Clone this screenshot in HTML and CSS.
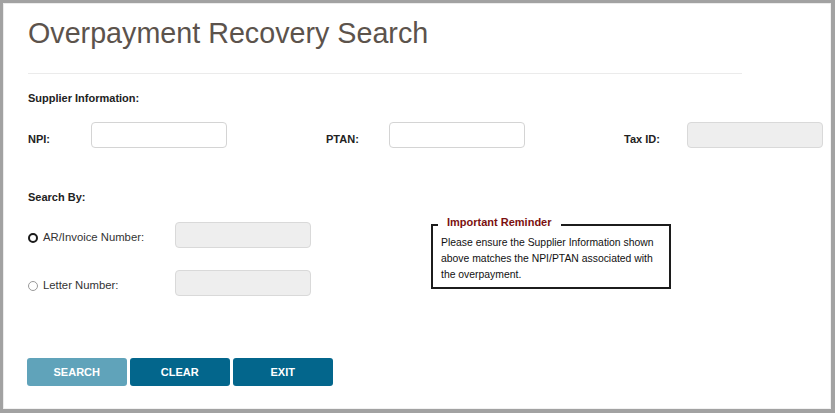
FILE: index.html
```html
<!DOCTYPE html>
<html lang="en">
<head>
<meta charset="utf-8">
<title>Overpayment Recovery Search</title>
<link rel="stylesheet" href="styles.css">
</head>
<body>
<div class="frame">
  <h1 class="title">Overpayment Recovery Search</h1>
  <div class="rule"></div>

  <div class="section-title">Supplier Information:</div>
  <div class="supplier-row">
    <div class="field">
      <label class="field-label">NPI:</label>
      <input class="text-input" type="text">
    </div>
    <div class="field">
      <label class="field-label">PTAN:</label>
      <input class="text-input" type="text">
    </div>
    <div class="field">
      <label class="field-label">Tax ID:</label>
      <input class="text-input" type="text" disabled>
    </div>
  </div>

  <div class="section-title search-title">Search By:</div>
  <div class="search-area">
    <div class="search-options">
      <div class="option">
        <label class="radio-label"><span class="radio radio-focus"></span>AR/Invoice Number:</label>
        <input class="text-input" type="text" disabled>
      </div>
      <div class="option">
        <label class="radio-label"><span class="radio"></span>Letter Number:</label>
        <input class="text-input" type="text" disabled>
      </div>
    </div>
    <fieldset class="reminder">
      <legend class="reminder-legend">Important Reminder</legend>
      <p class="reminder-text">Please ensure the Supplier Information shown above matches the NPI/PTAN associated with the overpayment.</p>
    </fieldset>
  </div>

  <div class="buttons">
    <button class="btn btn-disabled" type="button">SEARCH</button>
    <button class="btn" type="button">CLEAR</button>
    <button class="btn" type="button">EXIT</button>
  </div>
</div>
</body>
</html>
```

FILE: styles.css
```css
html, body {
  margin: 0;
  padding: 0;
  background: #ffffff;
}

.frame {
  box-sizing: border-box;
  width: 835px;
  height: 413px;
  border-style: solid;
  border-color: #a2a2a2;
  border-width: 3px 4px 4px 3px;
  box-shadow: inset 1px 1px 0 #ececec, inset -1px -1px 0 #f2f2f2;
  padding: 0 0 0 25px;
  font-family: "Liberation Sans", Arial, sans-serif;
  color: #333333;
  overflow: hidden;
}

.title {
  margin: 13px 0 0;
  font-size: 28.7px;
  line-height: 34px;
  font-weight: normal;
  color: #5c534c;
}

.rule {
  margin-top: 23px;
  width: 714px;
  height: 1px;
  background: #ebebeb;
}

.section-title {
  margin-top: 18px;
  font-size: 11px;
  line-height: 13px;
  font-weight: bold;
  color: #222222;
}

.supplier-row {
  margin-top: 17px;
  display: grid;
  grid-template-columns: 298px 298px 199px;
}

.field {
  display: flex;
  align-items: center;
}

.field-label {
  width: 63px;
  font-size: 11px;
  line-height: 13px;
  font-weight: bold;
  color: #222222;
  padding-top: 8px;
}

.text-input {
  box-sizing: border-box;
  width: 136px;
  height: 26px;
  margin: 0;
  border: 1px solid #d4d4d4;
  border-radius: 4px;
  background: #ffffff;
  font-family: inherit;
}

.text-input:disabled {
  background: #eeeeee;
  border-color: #d9d9d9;
}

.search-title {
  margin-top: 43px;
}

.search-area {
  display: flex;
  align-items: flex-start;
}

.search-options {
  width: 283px;
  padding-top: 18px;
  display: flex;
  flex-direction: column;
  gap: 22px;
}

.option {
  display: grid;
  grid-template-columns: 147px 136px;
  align-items: center;
}

.radio-label {
  display: flex;
  align-items: center;
  gap: 5px;
  font-size: 11.3px;
  line-height: 13px;
  color: #333333;
  padding-top: 5px;
}

.radio {
  box-sizing: border-box;
  width: 10px;
  height: 10px;
  border-radius: 50%;
  border: 1px solid #9a9a9a;
  background: #ffffff;
  flex: none;
}

.radio-focus {
  border: 2px solid #1a1a1a;
}

.reminder {
  box-sizing: border-box;
  margin: 12px 0 0 120px;
  width: 240px;
  min-width: 0;
  border: 2px solid #1c1c1c;
  padding: 0 8px 4px 8px;
}

.reminder-legend {
  margin-left: -3px;
  padding: 0 9px 4px;
  font-size: 11px;
  line-height: 13px;
  font-weight: bold;
  color: #7b1010;
}

.reminder-text {
  margin: 2px 0 0;
  font-size: 10.4px;
  line-height: 16px;
  color: #111111;
}

.buttons {
  margin-top: 62px;
  margin-left: -1px;
  display: flex;
  gap: 3.5px;
}

.btn {
  box-sizing: border-box;
  width: 99.5px;
  height: 28px;
  margin: 0;
  border: none;
  border-radius: 3px;
  background: #03668c;
  color: #ffffff;
  font-family: "Liberation Sans", Arial, sans-serif;
  font-size: 11px;
  font-weight: bold;
  padding: 0;
}

.btn-disabled {
  background: #60a3ba;
}
```
